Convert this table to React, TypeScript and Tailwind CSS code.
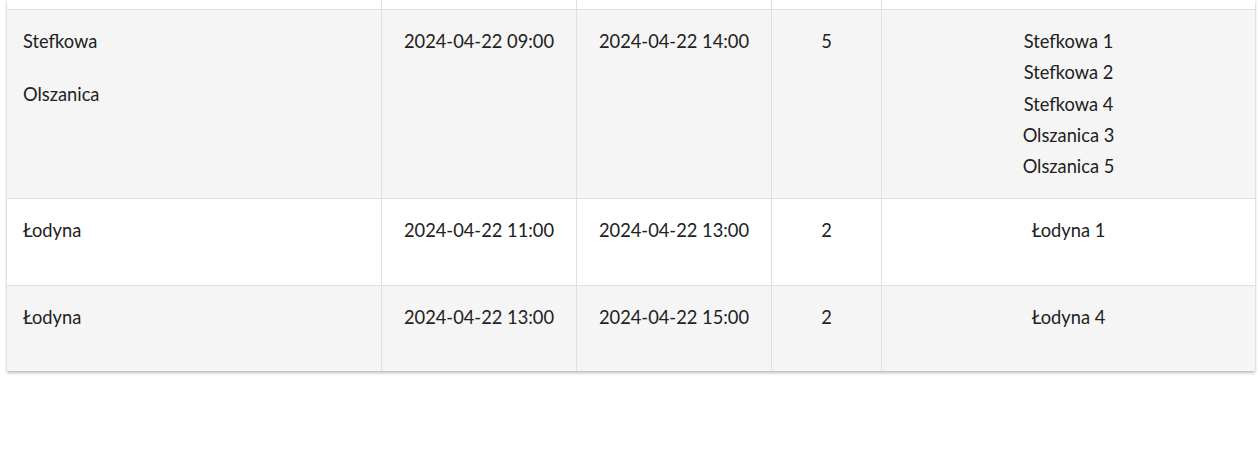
import React from "react";

type Row = { bg: string; h: string; loc: string[]; start: string; end: string; count: string; items: string[] };

const rows: Row[] = [
  {
    bg: "bg-[#f5f5f5]",
    h: "h-[189px]",
    loc: ["Stefkowa", "Olszanica"],
    start: "2024-04-22 09:00",
    end: "2024-04-22 14:00",
    count: "5",
    items: ["Stefkowa 1", "Stefkowa 2", "Stefkowa 4", "Olszanica 3", "Olszanica 5"],
  },
  {
    bg: "bg-white",
    h: "h-[87px]",
    loc: ["Łodyna"],
    start: "2024-04-22 11:00",
    end: "2024-04-22 13:00",
    count: "2",
    items: ["Łodyna 1"],
  },
  {
    bg: "bg-[#f5f5f5]",
    h: "h-[85px]",
    loc: ["Łodyna"],
    start: "2024-04-22 13:00",
    end: "2024-04-22 15:00",
    count: "2",
    items: ["Łodyna 4"],
  },
];

export default function App() {
  return (
    <div
      className="w-[1260px] h-[459px] bg-white overflow-hidden text-[#212121] text-[18.3px] leading-[31.25px]"
      style={{ fontFamily: "Lato, 'Open Sans', sans-serif" }}
    >
      <div className="ml-[7px] w-[1248px] shadow-[0_2px_3px_rgba(0,0,0,0.25),0_0_2px_rgba(0,0,0,0.08)]">
        <div className="flex h-[10px] border-b border-[#e0e0e0] bg-white">
          <div className="w-[375px] border-r border-[#e0e0e0]" />
          <div className="w-[195px] border-r border-[#e0e0e0]" />
          <div className="w-[195px] border-r border-[#e0e0e0]" />
          <div className="w-[110px] border-r border-[#e0e0e0]" />
          <div className="flex-1" />
        </div>
        {rows.map((r, i) => (
          <div
            key={i}
            className={`flex ${r.h} ${r.bg} ${i < rows.length - 1 ? "border-b border-[#e0e0e0]" : ""}`}
          >
            <div className="w-[375px] border-r border-[#e0e0e0] pl-4 pt-[16px]">
              {r.loc.map((l) => (
                <p key={l} className="mb-[21.5px]">
                  {l}
                </p>
              ))}
            </div>
            <div className="w-[195px] border-r border-[#e0e0e0] pt-[16px] text-center">{r.start}</div>
            <div className="w-[195px] border-r border-[#e0e0e0] pt-[16px] text-center">{r.end}</div>
            <div className="w-[110px] border-r border-[#e0e0e0] pt-[16px] text-center">{r.count}</div>
            <div className="flex-1 pt-[16px] text-center">
              {r.items.map((it) => (
                <div key={it}>{it}</div>
              ))}
            </div>
          </div>
        ))}
      </div>
    </div>
  );
}
